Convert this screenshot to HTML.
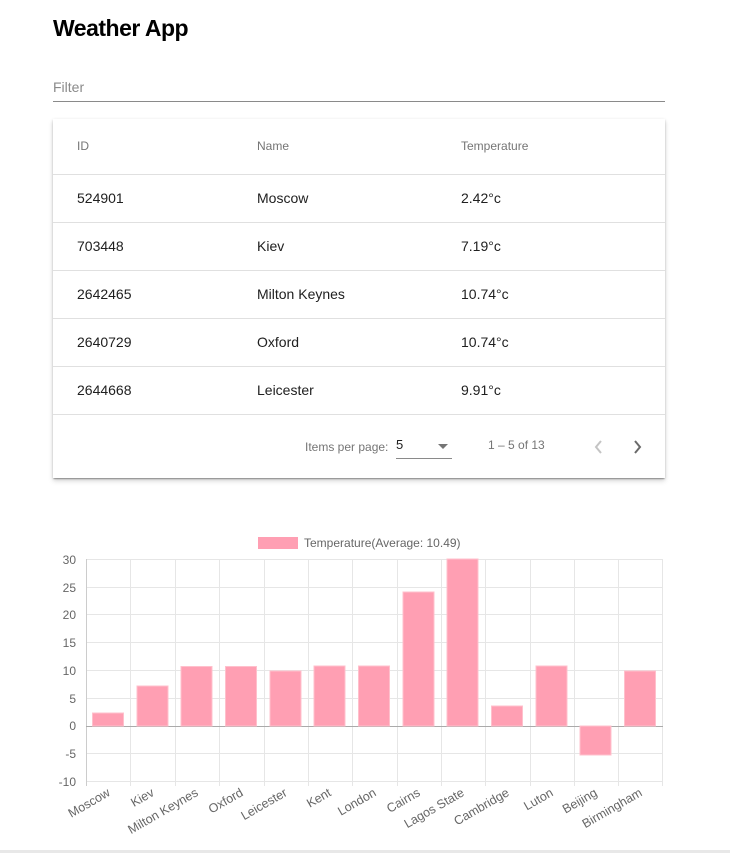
<!DOCTYPE html>
<html><head><meta charset="utf-8"><style>
body{margin:0;background:#fff;font-family:"Liberation Sans",sans-serif;width:730px;height:853px;overflow:hidden;position:relative}
h1{position:absolute;left:53px;top:15px;margin:0;font-size:23px;font-weight:bold;color:#000;letter-spacing:-0.5px}
.filter{position:absolute;left:53px;top:79px;width:612px;height:22px;border-bottom:1px solid #8a8a8a;color:#8a8a8a;font-size:14px}
.card{position:absolute;left:53px;top:119px;width:612px;height:359px;background:#fff;box-shadow:0 2px 1px -1px rgba(0,0,0,.2),0 1px 1px 0 rgba(0,0,0,.14),0 1px 3px 0 rgba(0,0,0,.12),0 3px 5px rgba(0,0,0,.15)}
.row{position:absolute;left:0;width:612px;height:48px;border-bottom:1px solid #e0e0e0;font-size:14px;color:#202020}
.row span{position:absolute;top:16px}
.hdr{height:55px;font-size:12px;color:#757575}
.hdr span{top:20px}
.c1{left:24px}.c2{left:204px}.c3{left:408px}
.pg{position:absolute;font-size:12px;color:#757575}
.bottom{position:absolute;left:0;top:850px;width:730px;height:3px;background:#e8e8e8}
</style></head><body>
<h1>Weather App</h1>
<div class="filter">Filter</div>
<div class="card">
<div class="row hdr" style="top:0"><span class="c1">ID</span><span class="c2">Name</span><span class="c3">Temperature</span></div>
<div class="row" style="top:55px"><span class="c1">524901</span><span class="c2">Moscow</span><span class="c3">2.42°c</span></div>
<div class="row" style="top:103px"><span class="c1">703448</span><span class="c2">Kiev</span><span class="c3">7.19°c</span></div>
<div class="row" style="top:151px"><span class="c1">2642465</span><span class="c2">Milton Keynes</span><span class="c3">10.74°c</span></div>
<div class="row" style="top:199px"><span class="c1">2640729</span><span class="c2">Oxford</span><span class="c3">10.74°c</span></div>
<div class="row" style="top:247px"><span class="c1">2644668</span><span class="c2">Leicester</span><span class="c3">9.91°c</span></div>
<div class="pg" style="left:252px;top:321px">Items per page:</div>
<div style="position:absolute;left:343px;top:318px;width:56px;height:21px;border-bottom:1px solid #8a8a8a;font-size:13px;color:#202020">5
<div style="position:absolute;right:4px;top:7px;width:0;height:0;border-left:5px solid transparent;border-right:5px solid transparent;border-top:5px solid #757575"></div></div>
<div class="pg" style="left:435px;top:319px">1 – 5 of 13</div>
<svg style="position:absolute;left:536px;top:318px" width="20" height="20"><path d="M12 4 L7 10 L12 16" stroke="#c4c4c4" stroke-width="2" fill="none"/></svg>
<svg style="position:absolute;left:574px;top:318px" width="20" height="20"><path d="M8 4 L13 10 L8 16" stroke="#6a6a6a" stroke-width="2" fill="none"/></svg>
</div>
<svg style="position:absolute;left:0;top:0" width="730" height="853" font-family="Liberation Sans,sans-serif" font-size="12" fill="#666">
<rect x="258" y="537" width="40" height="12" fill="#ff9fb3"/>
<text x="304" y="547">Temperature(Average: 10.49)</text>
<g stroke="#e6e6e6" stroke-width="1">
<line x1="86" y1="559.5" x2="663" y2="559.5"/><line x1="86" y1="587.5" x2="663" y2="587.5"/><line x1="86" y1="614.5" x2="663" y2="614.5"/><line x1="86" y1="642.5" x2="663" y2="642.5"/><line x1="86" y1="670.5" x2="663" y2="670.5"/><line x1="86" y1="698.5" x2="663" y2="698.5"/><line x1="86" y1="753.5" x2="663" y2="753.5"/><line x1="86" y1="781.5" x2="663" y2="781.5"/>
<line x1="130.5" y1="559" x2="130.5" y2="786"/><line x1="175.5" y1="559" x2="175.5" y2="786"/><line x1="219.5" y1="559" x2="219.5" y2="786"/><line x1="264.5" y1="559" x2="264.5" y2="786"/><line x1="308.5" y1="559" x2="308.5" y2="786"/><line x1="352.5" y1="559" x2="352.5" y2="786"/><line x1="397.5" y1="559" x2="397.5" y2="786"/><line x1="441.5" y1="559" x2="441.5" y2="786"/><line x1="485.5" y1="559" x2="485.5" y2="786"/><line x1="530.5" y1="559" x2="530.5" y2="786"/><line x1="574.5" y1="559" x2="574.5" y2="786"/><line x1="618.5" y1="559" x2="618.5" y2="786"/><line x1="662.5" y1="559" x2="662.5" y2="786"/>
</g>
<line x1="86.5" y1="559" x2="86.5" y2="786" stroke="#ccc"/>
<line x1="86" y1="726.5" x2="663" y2="726.5" stroke="#aaa"/>
<g fill="#ff9fb3" stroke="#ffc0cc" stroke-width="1">
<rect x="92.5" y="713" width="31" height="13"/>
<rect x="137" y="686" width="31" height="40"/>
<rect x="181" y="666.5" width="31" height="59.5"/>
<rect x="225.5" y="666.5" width="31" height="59.5"/>
<rect x="270" y="671" width="31" height="55"/>
<rect x="314" y="666" width="31" height="60"/>
<rect x="358.5" y="666" width="31" height="60"/>
<rect x="403" y="592" width="31" height="134"/>
<rect x="447" y="559" width="31" height="167"/>
<rect x="491.5" y="706" width="31" height="20"/>
<rect x="536" y="666" width="31" height="60"/>
<rect x="580" y="726" width="31" height="29"/>
<rect x="624.5" y="671" width="31" height="55"/>
</g>
<g text-anchor="end">
<text x="76" y="564">30</text><text x="76" y="592">25</text><text x="76" y="619">20</text><text x="76" y="647">15</text><text x="76" y="675">10</text><text x="76" y="703">5</text><text x="76" y="730">0</text><text x="76" y="758">-5</text><text x="76" y="786">-10</text>
</g>
<g text-anchor="end" font-size="12.5">
<text transform="translate(111,795) rotate(-30)">Moscow</text>
<text transform="translate(155,795) rotate(-30)">Kiev</text>
<text transform="translate(199,795) rotate(-30)">Milton Keynes</text>
<text transform="translate(244,795) rotate(-30)">Oxford</text>
<text transform="translate(288,795) rotate(-30)">Leicester</text>
<text transform="translate(332,795) rotate(-30)">Kent</text>
<text transform="translate(377,795) rotate(-30)">London</text>
<text transform="translate(421,795) rotate(-30)">Cairns</text>
<text transform="translate(465,795) rotate(-30)">Lagos State</text>
<text transform="translate(510,795) rotate(-30)">Cambridge</text>
<text transform="translate(554,795) rotate(-30)">Luton</text>
<text transform="translate(598,795) rotate(-30)">Beijing</text>
<text transform="translate(643,795) rotate(-30)">Birmingham</text>
</g>
</svg>
<div class="bottom"></div>
</body></html>
